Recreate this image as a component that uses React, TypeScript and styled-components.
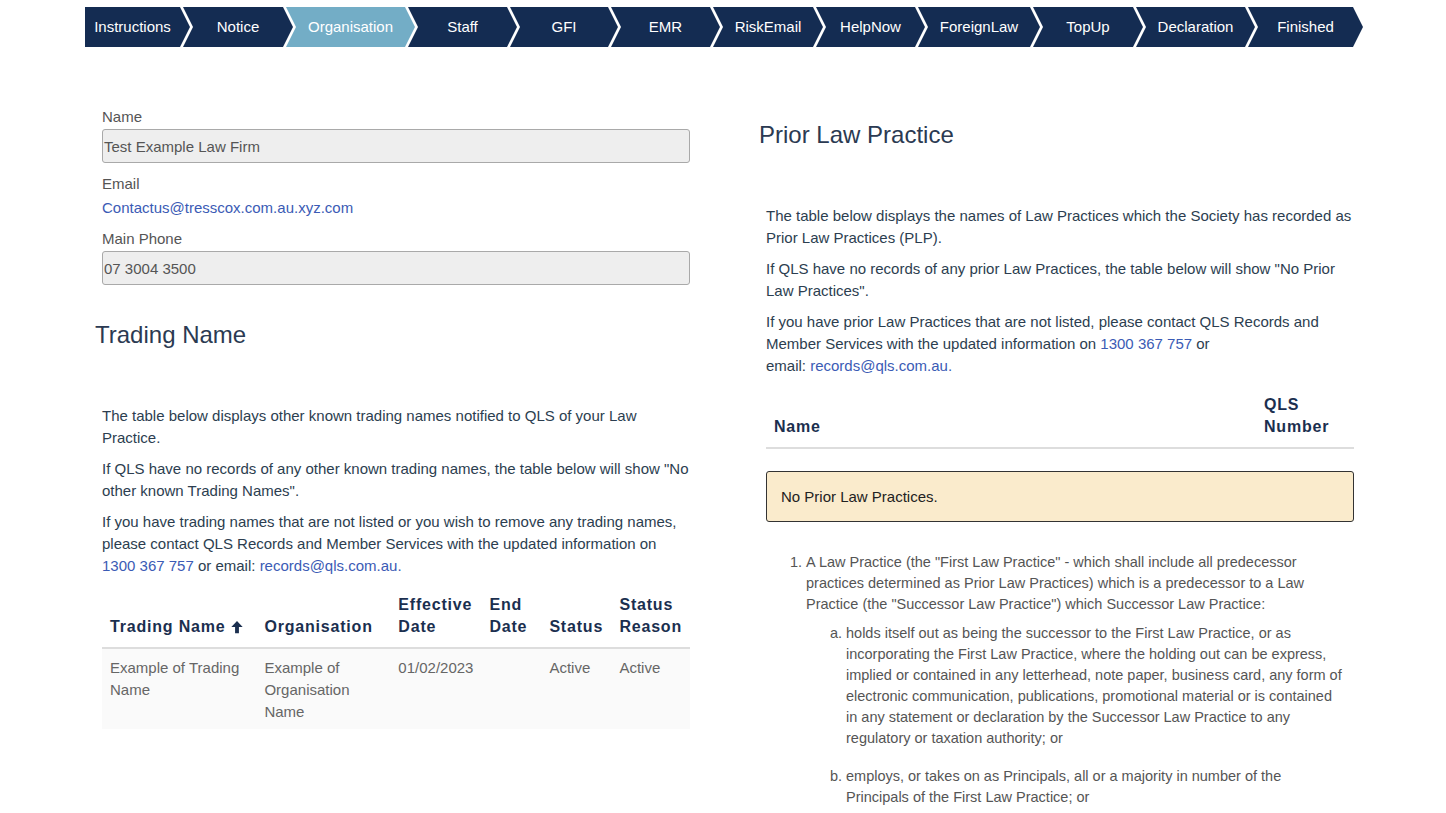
import React from 'react';
import styled, { createGlobalStyle } from 'styled-components';

const GlobalStyle = createGlobalStyle`
  html, body {
    margin: 0;
    padding: 0;
    background: #fff;
    font-family: "Liberation Sans", Arial, sans-serif;
    font-size: 15px;
    color: #2c3e50;
  }
  * { box-sizing: border-box; }
`;

const Wizard = styled.nav`
  display: flex;
  margin: 7px 0 0 85px;
  height: 40px;
`;

const Step = styled.div<{ $w: number; $first?: boolean; $active?: boolean }>`
  flex: 0 0 ${(p) => p.$w}px;
  margin-left: ${(p) => (p.$first ? 0 : -7)}px;
  height: 40px;
  display: flex;
  align-items: center;
  justify-content: center;
  padding: 0 10px 1px ${(p) => (p.$first ? 0 : 10)}px;
  background: ${(p) => (p.$active ? '#73adc6' : '#142c52')};
  color: #fff;
  font-size: 15px;
  white-space: nowrap;
  clip-path: ${(p) =>
    p.$first
      ? 'polygon(0 0, calc(100% - 10px) 0, 100% 50%, calc(100% - 10px) 100%, 0 100%)'
      : 'polygon(0 0, calc(100% - 10px) 0, 100% 50%, calc(100% - 10px) 100%, 0 100%, 10px 50%)'};
`;

const Columns = styled.main`
  display: grid;
  grid-template-columns: 588px 588px;
  column-gap: 76px;
  margin-left: 102px;
  padding-bottom: 40px;
`;

const Column = styled.section<{ $top: number }>`
  padding-top: ${(p) => p.$top}px;
`;

const Label = styled.div`
  color: #555;
  font-size: 15px;
  line-height: 20px;
  margin-bottom: 2px;
`;

const Field = styled.div`
  margin-bottom: 11px;
`;

const ReadOnlyInput = styled.div`
  height: 34px;
  display: flex;
  align-items: center;
  padding-left: 1px;
  background: #eeeeee;
  border: 1px solid #a9a9a9;
  border-radius: 3px;
  color: #555;
  font-size: 15px;
`;

const Link = styled.a`
  color: #3b5bb5;
  text-decoration: none;
`;

const LinkLine = styled.div`
  line-height: 20px;
  margin-top: 4px;
`;

const Heading = styled.h2<{ $top: number }>`
  margin: ${(p) => p.$top}px 0 57px -7px;
  font-size: 24px;
  font-weight: 400;
  line-height: 26px;
  color: #2b3a52;
`;

const Para = styled.p`
  margin: 0 0 9px;
  line-height: 22px;
  color: #2c3e50;
`;

const Table = styled.table`
  width: 100%;
  border-collapse: collapse;
  margin-top: 8px;
`;

const Th = styled.th<{ $w?: number }>`
  width: ${(p) => (p.$w ? `${p.$w}px` : 'auto')};
  padding: 8px 8px 9px;
  text-align: left;
  vertical-align: bottom;
  font-size: 16px;
  font-weight: 700;
  letter-spacing: 0.8px;
  line-height: 22px;
  color: #1b2f4f;
  border-bottom: 2px solid #dddddd;
`;

const Td = styled.td`
  padding: 8px 8px 6px;
  vertical-align: top;
  line-height: 22px;
  color: #666;
  background: #fafafa;
`;

const SortIcon = styled.svg`
  width: 14px;
  height: 14px;
  margin-left: 5px;
  vertical-align: -2px;
`;

const Notice = styled.div`
  margin-top: 22px;
  padding: 15px 14px;
  background: #faebcc;
  border: 1px solid #333;
  border-radius: 3px;
  color: #222;
  line-height: 19px;
`;

const List = styled.ol<{ $alpha?: boolean }>`
  margin: ${(p) => (p.$alpha ? '8px -20px 0 0' : '30px 0 0')};
  padding-left: 40px;
  list-style-type: ${(p) => (p.$alpha ? 'lower-alpha' : 'decimal')};
  color: #555;
  font-size: 14.5px;
  line-height: 21px;
`;

const Item = styled.li`
  margin-bottom: 17px;
`;

const steps = [
  { name: 'Instructions', w: 105 },
  { name: 'Notice', w: 110 },
  { name: 'Organisation', w: 129, active: true },
  { name: 'Staff', w: 109 },
  { name: 'GFI', w: 108 },
  { name: 'EMR', w: 109 },
  { name: 'RiskEmail', w: 110 },
  { name: 'HelpNow', w: 109 },
  { name: 'ForeignLaw', w: 122 },
  { name: 'TopUp', w: 110 },
  { name: 'Declaration', w: 119 },
  { name: 'Finished', w: 115 },
];

export default function App() {
  return (
    <>
      <GlobalStyle />
      <Wizard>
        {steps.map((s, i) => (
          <Step key={s.name} $w={s.w} $first={i === 0} $active={s.active}>
            {s.name}
          </Step>
        ))}
      </Wizard>

      <Columns>
        <Column $top={60}>
          <Field>
            <Label>Name</Label>
            <ReadOnlyInput>Test Example Law Firm</ReadOnlyInput>
          </Field>
          <Field>
            <Label>Email</Label>
            <LinkLine>
              <Link href="#">Contactus@tresscox.com.au.xyz.com</Link>
            </LinkLine>
          </Field>
          <Field>
            <Label>Main Phone</Label>
            <ReadOnlyInput>07 3004 3500</ReadOnlyInput>
          </Field>

          <Heading $top={37}>Trading Name</Heading>
          <Para>
            The table below displays other known trading names notified to QLS of your Law
            Practice.
          </Para>
          <Para>
            If QLS have no records of any other known trading names, the table below will show "No
            other known Trading Names".
          </Para>
          <Para>
            If you have trading names that are not listed or you wish to remove any trading names,
            please contact QLS Records and Member Services with the updated information on{' '}
            <Link href="#">1300 367 757</Link> or email: <Link href="#">records@qls.com.au.</Link>
          </Para>

          <Table>
            <thead>
              <tr>
                <Th $w={155}>
                  Trading Name
                  <SortIcon viewBox="0 0 16 16">
                    <path d="M8 1 L14.5 8 H10.2 V15 H5.8 V8 H1.5 Z" fill="#1b2f4f" />
                  </SortIcon>
                </Th>
                <Th $w={134}>Organisation</Th>
                <Th $w={91}>Effective Date</Th>
                <Th $w={60}>End Date</Th>
                <Th $w={70}>Status</Th>
                <Th>Status Reason</Th>
              </tr>
            </thead>
            <tbody>
              <tr>
                <Td>Example of Trading Name</Td>
                <Td>Example of Organisation Name</Td>
                <Td>01/02/2023</Td>
                <Td></Td>
                <Td>Active</Td>
                <Td>Active</Td>
              </tr>
            </tbody>
          </Table>
        </Column>

        <Column $top={0}>
          <Heading $top={75}>Prior Law Practice</Heading>
          <Para>
            The table below displays the names of Law Practices which the Society has recorded as
            Prior Law Practices (PLP).
          </Para>
          <Para>
            If QLS have no records of any prior Law Practices, the table below will show "No Prior
            Law Practices".
          </Para>
          <Para>
            If you have prior Law Practices that are not listed, please contact QLS Records and
            Member Services with the updated information on <Link href="#">1300 367 757</Link> or
            <br />
            email: <Link href="#">records@qls.com.au.</Link>
          </Para>

          <Table>
            <thead>
              <tr>
                <Th>Name</Th>
                <Th $w={98}>QLS Number</Th>
              </tr>
            </thead>
          </Table>

          <Notice>No Prior Law Practices.</Notice>

          <List>
            <li>
              A Law Practice (the "First Law Practice" - which shall include all predecessor
              practices determined as Prior Law Practices) which is a predecessor to a Law
              Practice (the "Successor Law Practice") which Successor Law Practice:
              <List $alpha>
                <Item>
                  holds itself out as being the successor to the First Law Practice, or as
                  <br />
                  incorporating the First Law Practice, where the holding out can be express,
                  <br />
                  implied or contained in any letterhead, note paper, business card, any form of
                  <br />
                  electronic communication, publications, promotional material or is contained
                  <br />
                  in any statement or declaration by the Successor Law Practice to any
                  <br />
                  regulatory or taxation authority; or
                </Item>
                <Item>
                  employs, or takes on as Principals, all or a majority in number of the
                  <br />
                  Principals of the First Law Practice; or
                </Item>
              </List>
            </li>
          </List>
        </Column>
      </Columns>
    </>
  );
}
